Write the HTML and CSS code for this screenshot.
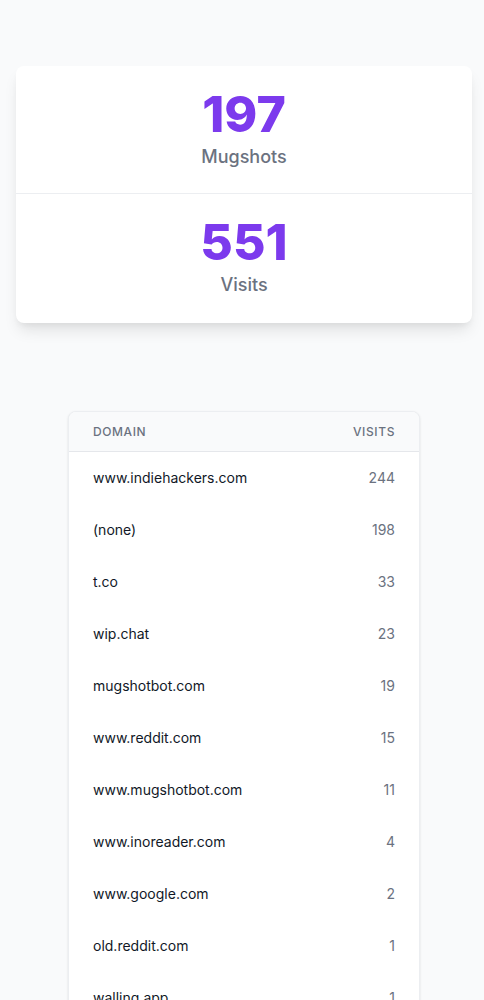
FILE: index.html
```html
<!DOCTYPE html>
<html>
<head>
<meta charset="utf-8">
<link rel="stylesheet" href="styles.css">
</head>
<body>
<main class="page">
  <section class="stats">
    <div class="stat">
      <div class="stat-value">197</div>
      <div class="stat-label">Mugshots</div>
    </div>
    <div class="stat">
      <div class="stat-value">551</div>
      <div class="stat-label">Visits</div>
    </div>
  </section>

  <section class="table-wrap">
    <table class="referrers">
      <thead>
        <tr><th>Domain</th><th class="num">Visits</th></tr>
      </thead>
      <tbody>
        <tr><td>www.indiehackers.com</td><td class="num">244</td></tr>
        <tr><td>(none)</td><td class="num">198</td></tr>
        <tr><td>t.co</td><td class="num">33</td></tr>
        <tr><td>wip.chat</td><td class="num">23</td></tr>
        <tr><td>mugshotbot.com</td><td class="num">19</td></tr>
        <tr><td>www.reddit.com</td><td class="num">15</td></tr>
        <tr><td>www.mugshotbot.com</td><td class="num">11</td></tr>
        <tr><td>www.inoreader.com</td><td class="num">4</td></tr>
        <tr><td>www.google.com</td><td class="num">2</td></tr>
        <tr><td>old.reddit.com</td><td class="num">1</td></tr>
        <tr><td>walling.app</td><td class="num">1</td></tr>
        <tr><td>news.ycombinator.com</td><td class="num">1</td></tr>
      </tbody>
    </table>
  </section>
</main>
</body>
</html>
```

FILE: styles.css
```css
* { box-sizing: border-box; }
html, body {
  margin: 0;
  padding: 0;
  background: #f9fafb;
  font-family: Inter, "Noto Sans", "Liberation Sans", sans-serif;
  -webkit-font-smoothing: antialiased;
}
.page {
  padding: 66px 12px 40px 16px;
}
.stats {
  background: #ffffff;
  border-radius: 8px;
  box-shadow: 0 10px 15px -3px rgba(0,0,0,0.1), 0 4px 6px -2px rgba(0,0,0,0.05);
  display: flex;
  flex-direction: column;
}
.stat {
  padding: 24px 0 22px;
  text-align: center;
}
.stat + .stat {
  border-top: 1px solid #eceef1;
  padding: 24px 0;
}
.stat-value {
  font-size: 50px;
  line-height: 48px;
  font-weight: 800;
  color: #7c3aed;
}
.stat-label {
  margin-top: 5px;
  font-size: 18px;
  line-height: 28px;
  font-weight: 500;
  color: #6b7280;
}
.table-wrap {
  margin: 88px 52px 0 52px;
  background: #ffffff;
  border-radius: 8px;
  box-shadow: 0 1px 3px rgba(0,0,0,0.08), 0 1px 2px rgba(0,0,0,0.04);
  border: 1px solid #eceef1;
  overflow: hidden;
}
.referrers {
  width: 100%;
  border-collapse: collapse;
}
.referrers th {
  background: #f9fafb;
  border-bottom: 1px solid #e5e7eb;
  padding: 12px 24px;
  font-size: 12px;
  line-height: 15px;
  font-weight: 500;
  letter-spacing: 0.6px;
  text-transform: uppercase;
  color: #6b7280;
  text-align: left;
}
.referrers td {
  padding: 16px 24px;
  font-size: 14px;
  line-height: 20px;
  font-weight: 400;
  color: #111827;
}
.referrers .num {
  text-align: right;
}
.referrers td.num {
  color: #6b7280;
}
```
